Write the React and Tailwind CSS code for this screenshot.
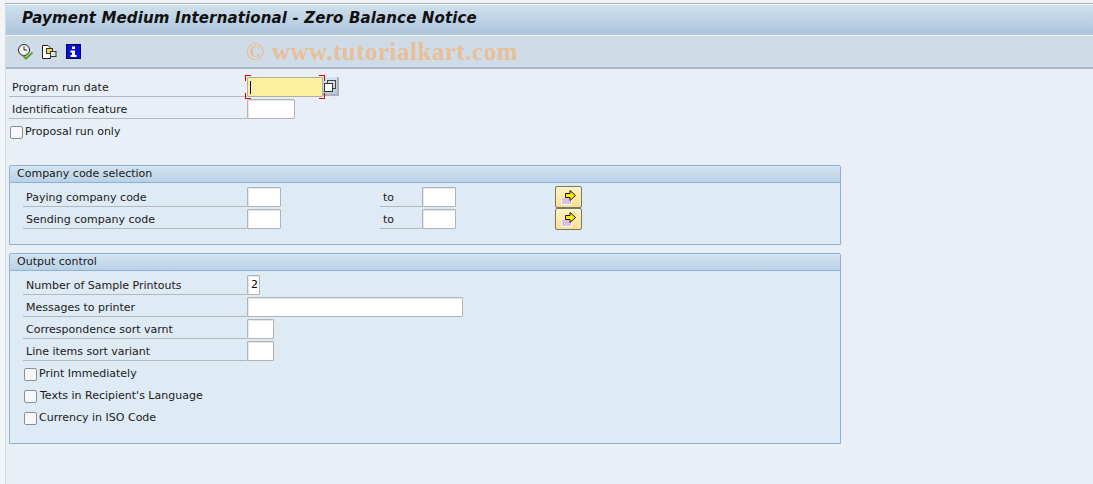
import React from 'react'

const font = { fontFamily: '"DejaVu Sans", sans-serif' }

const ClockIcon = () => (
    <svg width="17" height="17" viewBox="0 0 17 17" className="block">
        <circle cx="7" cy="7" r="5.5" fill="#f4f6f4" stroke="#222" strokeWidth="1" />
        <path d="M7 3.5V7H10" fill="none" stroke="#222" strokeWidth="1" />
        <path d="M6 12.5L9 15.5L15.5 9.5" fill="none" stroke="#5fa030" strokeWidth="2" />
    </svg>
)

const DocsIcon = () => (
    <svg width="16" height="16" viewBox="0 0 16 16" className="block">
        <path d="M1.5 1.5H7L9.5 4V14.5H1.5Z" fill="#fff" stroke="#222" />
        <rect x="5.5" y="4.5" width="6" height="5" fill="#f5d838" stroke="#333" />
        <rect x="9.5" y="7.5" width="5.5" height="5" fill="#dfe4e8" stroke="#333" />
    </svg>
)

const InfoIcon = () => (
    <svg width="15" height="15" viewBox="0 0 15 15" className="block">
        <rect width="15" height="15" fill="#0a10d8" />
        <rect x="0.5" y="0.5" width="14" height="14" fill="none" stroke="#000060" />
        <path d="M6 2.5H9V5H6ZM4.5 6.5H9V11H10.5V13H4.5V11H6V8.5H4.5Z" fill="#fff" />
    </svg>
)

const ArrowIcon = () => (
    <svg width="18" height="16" viewBox="0 0 18 16" className="block">
        <rect x="1" y="9" width="11" height="7" fill="#fff" />
        <rect x="2" y="9" width="9" height="6" fill="#d8c4e0" />
        <path d="M5.5 4.5H10V1.5L15.5 6.5L10 11.5V8.5H5.5Z" fill="#ffe800" stroke="#111" />
    </svg>
)

const MultiIcon = () => (
    <svg width="12" height="12" viewBox="0 0 12 12" className="block">
        <rect x="3.5" y="0.5" width="8" height="8" fill="none" stroke="#444" />
        <rect x="0.5" y="3.5" width="8" height="8" fill="#fff" stroke="#333" />
    </svg>
)

const Input = ({ width, value }) => (
    <div className={`${width} h-[20px] shrink-0 bg-white border border-[#b0b4b8] rounded-[1px] shadow-[inset_1px_1px_0_#e4e6e8] text-[11px] leading-[18px] pl-[4px] text-black`}>
        {value}
    </div>
)

const Row = ({ label, labelWidth, children, indent }) => (
    <div className={`flex h-[22px] items-start ${indent}`}>
        <div className={`${labelWidth} h-[20px] shrink-0 border-b border-[#b4b8bc] text-[11px] leading-[22px] text-[#1a1a1a] pl-[3px] whitespace-nowrap`}>
            {label}
        </div>
        {children}
    </div>
)

const Check = ({ label, indent, gap }) => (
    <div className={`flex h-[22px] items-start ${indent}`}>
        <div className="w-[13px] h-[13px] mt-[5px] shrink-0 bg-[#f6f8fa] border border-[#8c9094] rounded-[2px]"></div>
        <span className={`${gap} text-[11px] leading-[22px] text-[#1a1a1a] whitespace-nowrap`}>{label}</span>
    </div>
)

const Group = ({ title, height, children }) => (
    <div className={`${height} w-[832px] ml-[3px] border border-[#8fb0cf] rounded-t-[2px] bg-[#deeaf4]`}>
        <div className="h-[17px] border-b border-[#8fb0cf] bg-gradient-to-b from-[#d3e3f1] to-[#b9d1e7] text-[11px] leading-[16px] text-[#1a1a1a] pl-[7px]">
            {title}
        </div>
        {children}
    </div>
)

const RangeRow = ({ label }) => (
    <Row label={label} labelWidth="w-[224px]" indent="ml-[13px]">
        <Input width="w-[34px]" />
        <div className="w-[43px] shrink-0 ml-[99px] h-[20px] border-b border-[#b4b8bc] text-[11px] leading-[22px] text-[#1a1a1a] pl-[3px]">to</div>
        <div className="-ml-[1px] shrink-0"><Input width="w-[34px]" /></div>
        <div className="ml-[99px] -mt-[1px] w-[27px] h-[22px] shrink-0 flex items-center justify-center bg-gradient-to-b from-[#fff3c4] to-[#fbdf8e] border border-[#77776a] rounded-[2px]">
            <ArrowIcon />
        </div>
    </Row>
)

const App = () => {
    return (
        <div style={font} className="w-[1093px] h-[484px] overflow-hidden bg-[#f1f4f9] pl-[5px]">
            <div className="h-[4px] border-b border-[#a9b3bf] bg-[#eef1f6]"></div>
            <div className="h-[480px] border-l border-[#d2d9e2] bg-[#e8eff7]">
                <div className="h-[32px] border-t border-[#f4f8fb] border-b border-b-[#f2f6fa] bg-gradient-to-b from-[#cfe0ec] to-[#adc4dc] pl-[16px] text-[15px] tracking-[0.14px] leading-[27px] font-bold italic text-[#111] whitespace-nowrap">
                    Payment Medium International - Zero Balance Notice
                </div>
                <div className="h-[33px] flex items-center border-b-2 border-[#a8b8ca] bg-[#cfdce7]">
                    <div className="ml-[11px]"><ClockIcon /></div>
                    <div className="ml-[7px]"><DocsIcon /></div>
                    <div className="ml-[9px]"><InfoIcon /></div>
                    <span className="ml-[165px] text-[25px] leading-[30px] font-bold tracking-[0.5px] text-[#e8bf98]" style={{ fontFamily: '"Liberation Serif", serif' }}>
                        © www.tutorialkart.com
                    </span>
                </div>

                <div className="pt-[8px]">
                    <Row label="Program run date" labelWidth="w-[238px]" indent="ml-[3px]">
                        <div className="relative shrink-0 w-[76px] h-[20px] bg-[#fff0a0] border border-[#b0b0a0] rounded-[1px]">
                            <div className="absolute left-[2px] top-[3px] w-[1px] h-[13px] bg-[#000080]"></div>
                            <div className="absolute -left-[3px] -top-[3px] w-[6px] h-[6px] border-l border-t border-[#e00000]"></div>
                            <div className="absolute -right-[3px] -top-[3px] w-[6px] h-[6px] border-r border-t border-[#e00000]"></div>
                            <div className="absolute -left-[3px] -bottom-[3px] w-[6px] h-[6px] border-l border-b border-[#e00000]"></div>
                            <div className="absolute -right-[3px] -bottom-[3px] w-[6px] h-[6px] border-r border-b border-[#e00000]"></div>
                        </div>
                        <div className="w-[16px] h-[19px] shrink-0 flex items-center justify-center bg-gradient-to-b from-[#d8e4f0] to-[#b4c8e0] border-r-2 border-b-2 border-[#a8b0bc] rounded-[1px]">
                            <MultiIcon />
                        </div>
                    </Row>
                    <Row label="Identification feature" labelWidth="w-[238px]" indent="ml-[3px]">
                        <Input width="w-[48px]" />
                    </Row>
                    <Check label="Proposal run only" indent="ml-[4px]" gap="ml-[2px]" />
                </div>

                <div className="mt-[22px]">
                    <Group title="Company code selection" height="h-[80px]">
                        <div className="pt-[4px]">
                            <RangeRow label="Paying company code" />
                            <RangeRow label="Sending company code" />
                        </div>
                    </Group>
                </div>

                <div className="mt-[8px]">
                    <Group title="Output control" height="h-[191px]">
                        <div className="pt-[4px]">
                            <Row label="Number of Sample Printouts" labelWidth="w-[224px]" indent="ml-[13px]">
                                <Input width="w-[13px]" value={<span className="-ml-[1px]">2</span>} />
                            </Row>
                            <Row label="Messages to printer" labelWidth="w-[224px]" indent="ml-[13px]">
                                <Input width="w-[216px]" />
                            </Row>
                            <Row label="Correspondence sort varnt" labelWidth="w-[224px]" indent="ml-[13px]">
                                <Input width="w-[27px]" />
                            </Row>
                            <Row label="Line items sort variant" labelWidth="w-[224px]" indent="ml-[13px]">
                                <Input width="w-[27px]" />
                            </Row>
                            <Check label="Print Immediately" indent="ml-[14px]" gap="ml-[2px]" />
                            <Check label="Texts in Recipient's Language" indent="ml-[14px]" gap="ml-[3px]" />
                            <Check label="Currency in ISO Code" indent="ml-[14px]" gap="ml-[2px]" />
                        </div>
                    </Group>
                </div>
            </div>
        </div>
    )
}

export default App
